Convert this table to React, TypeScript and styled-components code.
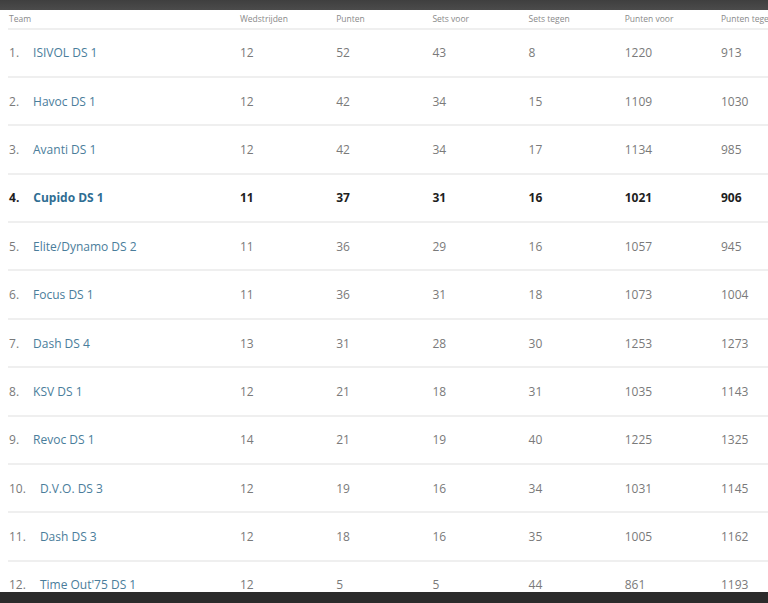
import styled, { createGlobalStyle } from 'styled-components';

const GlobalStyle = createGlobalStyle`
  html, body {
    margin: 0;
    padding: 0;
    background: #ffffff;
    overflow: hidden;
  }
  body {
    font-family: 'Open Sans', 'Noto Sans', sans-serif;
  }
`;

const TopBar = styled.div`
  height: 10px;
  background: linear-gradient(#3f3f3f, #4b4b4b);
`;

const BottomBar = styled.div`
  position: fixed;
  left: 0;
  right: 0;
  bottom: 0;
  height: 11px;
  background: #2b2b2b;
`;

const Table = styled.div`
  margin-left: 8px;
  width: 900px;
`;

const Row = styled.div<{ $header?: boolean }>`
  display: grid;
  grid-template-columns: 231px repeat(6, 96.2px) 1fr;
  align-items: center;
  height: ${(p) => (p.$header ? '19.5px' : '48.4px')};
  box-sizing: border-box;
  border-bottom: 2px solid #efefef;
`;

const HeadCell = styled.div`
  padding-left: 1px;
  font-size: 8.5px;
  color: #8a8a8a;
  white-space: nowrap;
  overflow: hidden;
`;

const Cell = styled.div<{ $bold?: boolean }>`
  padding-left: 1px;
  font-size: 12px;
  color: ${(p) => (p.$bold ? '#1e1e1e' : '#7a7a7a')};
  font-weight: ${(p) => (p.$bold ? 700 : 400)};
  white-space: nowrap;
`;

const Rank = styled.span`
  margin-right: 14px;
`;

const TeamName = styled.span<{ $bold?: boolean }>`
  color: ${(p) => (p.$bold ? '#2f6e93' : '#4a7d9b')};
`;

const headers = ['Team', 'Wedstrijden', 'Punten', 'Sets voor', 'Sets tegen', 'Punten voor', 'Punten tegen'];

const standings: [string, number, number, number, number, number, number][] = [
  ['ISIVOL DS 1', 12, 52, 43, 8, 1220, 913],
  ['Havoc DS 1', 12, 42, 34, 15, 1109, 1030],
  ['Avanti DS 1', 12, 42, 34, 17, 1134, 985],
  ['Cupido DS 1', 11, 37, 31, 16, 1021, 906],
  ['Elite/Dynamo DS 2', 11, 36, 29, 16, 1057, 945],
  ['Focus DS 1', 11, 36, 31, 18, 1073, 1004],
  ['Dash DS 4', 13, 31, 28, 30, 1253, 1273],
  ['KSV DS 1', 12, 21, 18, 31, 1035, 1143],
  ['Revoc DS 1', 14, 21, 19, 40, 1225, 1325],
  ['D.V.O. DS 3', 12, 19, 16, 34, 1031, 1145],
  ['Dash DS 3', 12, 18, 16, 35, 1005, 1162],
  ["Time Out'75 DS 1", 12, 5, 5, 44, 861, 1193],
];

const OWN_TEAM = 'Cupido DS 1';

export default function App() {
  return (
    <>
      <GlobalStyle />
      <TopBar />
      <Table>
        <Row $header>
          {headers.map((h) => (
            <HeadCell key={h}>{h}</HeadCell>
          ))}
        </Row>
        {standings.map(([team, ...stats], index) => {
          const bold = team === OWN_TEAM;
          return (
            <Row key={team}>
              <Cell $bold={bold}>
                <Rank>{index + 1}.</Rank>
                <TeamName $bold={bold}>{team}</TeamName>
              </Cell>
              {stats.map((value, i) => (
                <Cell key={i} $bold={bold}>
                  {value}
                </Cell>
              ))}
            </Row>
          );
        })}
      </Table>
      <BottomBar />
    </>
  );
}
